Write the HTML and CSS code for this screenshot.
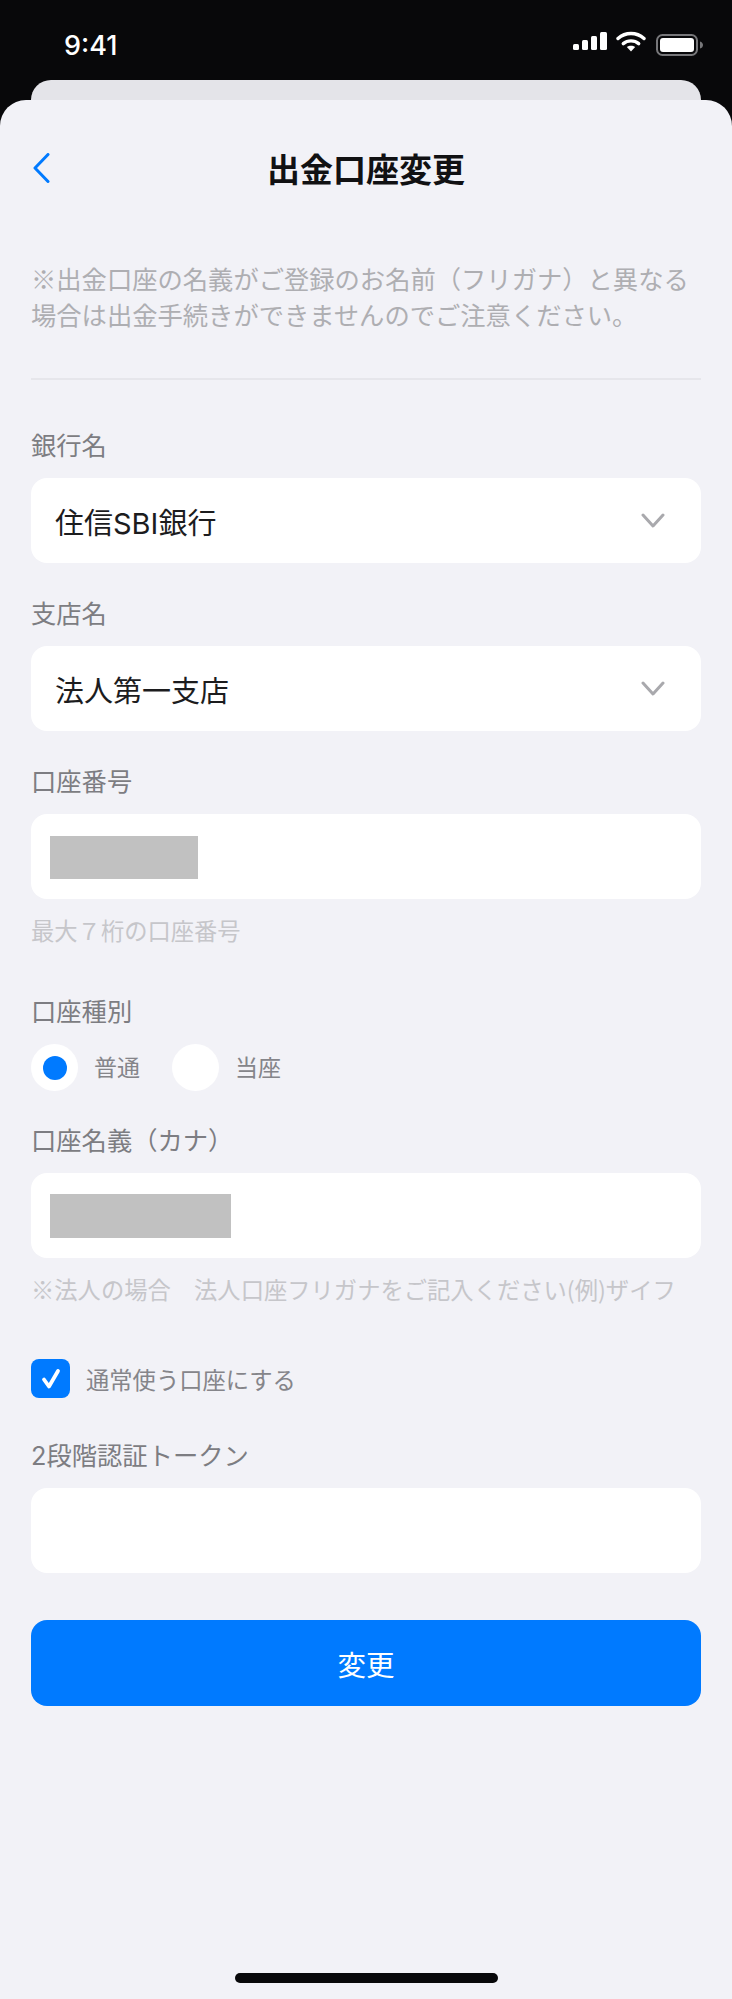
FILE: index.html
```html
<!DOCTYPE html>
<html lang="ja">
<head>
    <meta charset="UTF-8">
    <meta name="viewport" content="width=device-width, initial-scale=1.0">
    <title>出金口座変更</title>
    <link rel="stylesheet" href="styles.css">
</head>

<body>

    <!-- Status bar -->
    <div class="status-bar">
        <span class="time">9:41</span>
        <div class="status-icons">
            <svg class="signal" width="34" height="18" viewBox="0 0 34 18">
                <rect x="0" y="12" width="6" height="6" rx="1.5"/>
                <rect x="9" y="8" width="6" height="10" rx="1.5"/>
                <rect x="18" y="4" width="6" height="14" rx="1.5"/>
                <rect x="27" y="0" width="7" height="18" rx="1.5"/>
            </svg>
            <svg class="wifi" width="30" height="21" viewBox="0 0 30 21">
                <path d="M2 7.5C9.5 .8 20.5 .8 28 7.5" fill="none" stroke="#fff" stroke-width="3.4" stroke-linecap="round"/>
                <path d="M7.3 12.6C11.6 9 18.4 9 22.7 12.6" fill="none" stroke="#fff" stroke-width="3.4" stroke-linecap="round"/>
                <path d="M10.8 16 15 20.5 19.2 16C16.8 14.2 13.2 14.2 10.8 16Z" fill="#fff"/>
            </svg>
            <svg class="battery" width="48" height="22" viewBox="0 0 48 22">
                <rect x="1" y="1" width="40" height="20" rx="5.5" fill="none" stroke="#77777a" stroke-width="2"/>
                <rect x="4" y="4" width="34" height="14" rx="3" fill="#fff"/>
                <path d="M44 7.5c2 .5 3 2 3 3.5s-1 3-3 3.5Z" fill="#77777a"/>
            </svg>
        </div>
    </div>

    <div class="back-card"></div>

    <div class="sheet">

        <div class="sheet-header">
            <a href="#" class="back-link">
                <svg width="17" height="30" viewBox="0 0 17 30">
                    <path d="M15 1.500 2 15l13 13.500" fill="none" stroke="#007aff" stroke-width="3" stroke-linecap="round" stroke-linejoin="round"/>
                </svg>
            </a>
            <h1>出金口座変更</h1>
        </div>

        <p class="notice">※出金口座の名義がご登録のお名前（フリガナ）と異なる<br>場合は出金手続きができませんのでご注意ください。</p>

        <hr class="divider">

        <div class="field">
            <label class="field-label">銀行名</label>
            <div class="box select-box">
                <span>住信<span class="latin">SBI</span>銀行</span>
                <svg class="chevron" width="24" height="15" viewBox="0 0 24 15">
                    <path d="M2 2l10 11L22 2" fill="none" stroke="#a9a9ad" stroke-width="3" stroke-linecap="round" stroke-linejoin="round"/>
                </svg>
            </div>
        </div>

        <div class="field">
            <label class="field-label">支店名</label>
            <div class="box select-box">
                <span>法人第一支店</span>
                <svg class="chevron" width="24" height="15" viewBox="0 0 24 15">
                    <path d="M2 2l10 11L22 2" fill="none" stroke="#a9a9ad" stroke-width="3" stroke-linecap="round" stroke-linejoin="round"/>
                </svg>
            </div>
        </div>

        <div class="field field-hinted">
            <label class="field-label">口座番号</label>
            <div class="box input-box">
                <div class="mask mask-number"></div>
            </div>
            <p class="hint">最大７桁の口座番号</p>
        </div>

        <div class="field field-type">
            <label class="field-label">口座種別</label>
            <div class="radio-group">
                <div class="radio-item">
                    <span class="radio"><span class="radio-dot"></span></span>
                    <span class="radio-text">普通</span>
                </div>
                <div class="radio-item">
                    <span class="radio"></span>
                    <span class="radio-text">当座</span>
                </div>
            </div>
        </div>

        <div class="field field-kana">
            <label class="field-label">口座名義（カナ）</label>
            <div class="box input-box">
                <div class="mask mask-name"></div>
            </div>
            <p class="hint">※法人の場合　法人口座フリガナをご記入ください(例)ザイフ</p>
        </div>

        <div class="check-row">
            <span class="checkbox">
                <svg width="22" height="24" viewBox="0 0 22 24">
                    <path d="M4 12.500l5 7L18 4" fill="none" stroke="#fff" stroke-width="3.800" stroke-linecap="round" stroke-linejoin="round"/>
                </svg>
            </span>
            <span class="check-text">通常使う口座にする</span>
        </div>

        <div class="field">
            <label class="field-label"><span class="latin">2</span>段階認証トークン</label>
            <div class="box input-box"></div>
        </div>

        <button class="submit">変更</button>

        <div class="home-indicator"></div>
    </div>

</body>

</html>
```

FILE: styles.css
```css
html,
body {
    margin: 0;
    padding: 0;
}

body {
    font-family: "Noto Sans CJK JP", sans-serif;
    background-color: #08080a;
    color: #1c1c1e;
}

.latin {
    font-family: Inter, sans-serif;
}

/* Status bar */
.status-bar {
    height: 80px;
    display: flex;
    justify-content: space-between;
    align-items: flex-start;
    box-sizing: border-box;
    padding: 29px 28px 0 64px;
}

.time {
    font-family: Inter, sans-serif;
    color: #ffffff;
    font-size: 27px;
    font-weight: 500;
    line-height: 34px;
}

.status-icons {
    display: flex;
    align-items: flex-start;
    margin-top: 2px;
}

.signal {
    fill: #ffffff;
    margin-top: 1px;
    margin-right: 9px;
}

.wifi {
    margin-right: 10px;
}

.battery {
    margin-top: 3px;
}

/* Card peeking out behind the sheet */
.back-card {
    height: 20px;
    margin: 0 31px;
    background-color: #e4e4e9;
    border-radius: 24px 24px 0 0;
}

.sheet {
    background-color: #f2f2f7;
    border-radius: 26px 26px 0 0;
    padding: 36px 31px 16px;
}

.sheet-header {
    position: relative;
    height: 64px;
    display: flex;
    align-items: center;
    justify-content: center;
}

.sheet-header h1 {
    margin: 0;
    font-size: 33px;
    font-weight: 700;
    color: #111113;
}

.back-link {
    position: absolute;
    left: 2px;
    top: 17px;
    display: block;
    height: 30px;
}

.notice {
    margin: 60px 0 0;
    font-size: 25.300px;
    line-height: 36px;
    color: #aeaeb2;
    white-space: nowrap;
}

.divider {
    height: 2px;
    margin: 46px 0 49px;
    border: none;
    background-color: #e6e6eb;
}

.field {
    margin-bottom: 34px;
}

.field-label {
    display: block;
    height: 32px;
    font-size: 25.300px;
    line-height: 30px;
    color: #7d7d82;
    margin-bottom: 17px;
}

.box {
    height: 85px;
    box-sizing: border-box;
    background-color: #ffffff;
    border-radius: 16px;
    display: flex;
    align-items: center;
}

.select-box {
    justify-content: space-between;
    padding: 0 36px 0 24px;
    font-size: 29px;
}

.input-box {
    padding-left: 19px;
}

.chevron {
    display: block;
}

.mask {
    background-color: #c1c1c1;
}

.mask-number {
    width: 148px;
    height: 43px;
    margin-top: 1px;
}

.mask-name {
    width: 181px;
    height: 44px;
}

.hint {
    height: 32px;
    margin: 16px 0 0;
    font-size: 23.300px;
    line-height: 30px;
    color: #c6c6ca;
    white-space: nowrap;
}

.field-hinted {
    margin-bottom: 48px;
}

.field-kana {
    margin-bottom: 53px;
}

.field-type {
    margin-bottom: 33px;
}

.radio-group {
    display: flex;
    gap: 32px;
}

.radio-item {
    display: flex;
    align-items: center;
    gap: 16px;
}

.radio {
    width: 47px;
    height: 47px;
    border-radius: 50%;
    background-color: #ffffff;
    display: flex;
    align-items: center;
    justify-content: center;
}

.radio-dot {
    width: 24px;
    height: 24px;
    border-radius: 50%;
    background-color: #007aff;
}

.radio-text {
    font-size: 23px;
    line-height: 32px;
    margin-top: -3px;
    color: #85858a;
}

.check-row {
    display: flex;
    align-items: center;
    gap: 16px;
    margin-bottom: 41px;
}

.checkbox {
    width: 39px;
    height: 39px;
    border-radius: 8px;
    background-color: #007aff;
    display: flex;
    align-items: center;
    justify-content: center;
}

.check-text {
    font-size: 23.300px;
    color: #85858a;
}

.submit {
    display: block;
    width: 100%;
    height: 86px;
    margin-top: 47px;
    border: none;
    border-radius: 16px;
    background-color: #007aff;
    color: #ffffff;
    font-family: inherit;
    font-size: 28.500px;
}

.home-indicator {
    width: 263px;
    height: 10px;
    margin: 267px auto 0;
    border-radius: 5px;
    background-color: #08080a;
}
```
